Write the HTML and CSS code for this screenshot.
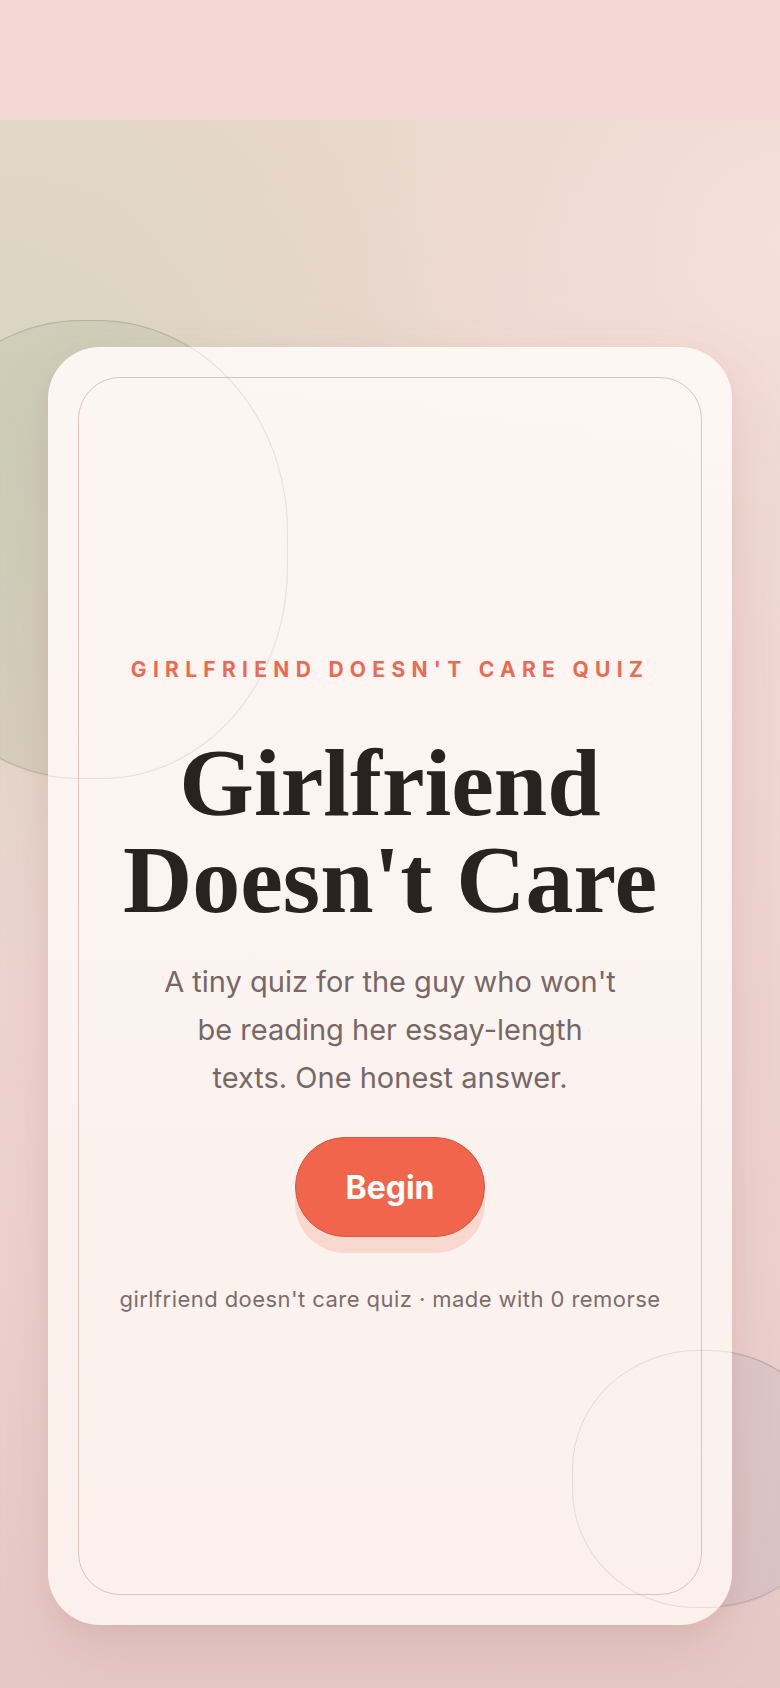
FILE: index.html
```html
<!DOCTYPE html>
<html lang="en">
<head>
<meta charset="utf-8">
<title>Girlfriend Doesn't Care Quiz</title>
<link rel="stylesheet" href="styles.css">
</head>
<body>
<div class="top-band"></div>
<main class="stage">
  <div class="blob blob-tl"></div>
  <div class="blob blob-br"></div>
  <section class="card">
    <div class="frame">
      <p class="eyebrow">GIRLFRIEND DOESN'T CARE QUIZ</p>
      <h1 class="title">Girlfriend<br>Doesn't Care</h1>
      <p class="lead">A tiny quiz for the guy who won't be reading her essay-length texts. One honest answer.</p>
      <button class="begin" type="button">Begin</button>
      <p class="foot">girlfriend doesn't care quiz · made with 0 remorse</p>
    </div>
  </section>
</main>
</body>
</html>
```

FILE: styles.css
```css
* { box-sizing: border-box; }

html, body {
  margin: 0;
  padding: 0;
}

body {
  background: #f4d8d5;
  font-family: "Inter", "Noto Sans", sans-serif;
  width: 780px;
  height: 1688px;
  overflow: hidden;
}

.top-band {
  height: 120px;
  background: #f4d8d5;
}

.stage {
  position: relative;
  height: 1568px;
  overflow: hidden;
  padding: 227px 48px 0;
  background:
    radial-gradient(ellipse 500px 540px at 0px 330px, rgba(214, 212, 190, 0.95) 0%, rgba(214, 212, 190, 0.6) 40%, rgba(214, 212, 190, 0) 100%),
    radial-gradient(ellipse 420px 420px at 780px 120px, rgba(248, 223, 219, 0.9) 0%, rgba(248, 223, 219, 0) 100%),
    linear-gradient(180deg, #ead8cd 0%, #f0d7d3 40%, #ebd1ce 75%, #e6c9c7 100%);
}

.blob {
  position: absolute;
  border-radius: 48% 48% 47% 47% / 46% 46% 46% 46%;
}

.blob::after {
  content: "";
  position: absolute;
  inset: -1.5px;
  border-radius: inherit;
  border: 1.5px solid rgba(175, 170, 160, 0.28);
  z-index: 2;
}

.blob-tl {
  left: -108px;
  top: 200px;
  width: 395px;
  height: 458px;
  background: rgba(180, 186, 160, 0.28);
  border: 1.5px solid rgba(150, 155, 135, 0.45);
}

.blob-br {
  left: 572px;
  top: 1230px;
  width: 262px;
  height: 257px;
  background: rgba(190, 175, 185, 0.28);
  border: 1.5px solid rgba(140, 130, 140, 0.4);
}

.card {
  position: relative;
  z-index: 1;
  height: 1278px;
  border-radius: 52px;
  padding: 30px;
  background: linear-gradient(180deg, rgba(253, 248, 245, 0.96) 0%, rgba(252, 242, 238, 0.95) 100%);
  box-shadow: 0 30px 60px rgba(170, 110, 105, 0.17), 0 6px 18px rgba(170, 110, 105, 0.08);
}

.frame {
  height: 100%;
  border: 1.5px solid #dcc4bd;
  border-radius: 42px;
  display: flex;
  flex-direction: column;
  align-items: center;
  justify-content: center;
  text-align: center;
}

.eyebrow {
  margin: 0;
  font-size: 21px;
  line-height: 1;
  font-weight: 700;
  letter-spacing: 0.3em;
  color: #ec6a51;
}

.title {
  margin: 54px 0 0;
  font-family: "Liberation Serif", "Times New Roman", serif;
  font-weight: 700;
  font-size: 96px;
  line-height: 97px;
  letter-spacing: 0;
  color: #2a2220;
}

.lead {
  margin: 30px 0 0;
  max-width: 458px;
  font-size: 29px;
  line-height: 48px;
  color: #776866;
}

.begin {
  margin-top: 35px;
  width: 190px;
  height: 100px;
  border-radius: 50px;
  border: 1.5px solid #d8553f;
  background: #f0654c;
  color: #ffffff;
  font-family: "Inter", "Noto Sans", sans-serif;
  font-weight: 700;
  font-size: 32px;
  box-shadow: 0 16px 0 #f9d8d0;
  padding: 0;
}

.foot {
  margin: 49px 0 0;
  font-size: 22px;
  line-height: 1.2;
  letter-spacing: 0.02em;
  color: #7d6d6b;
}
```
